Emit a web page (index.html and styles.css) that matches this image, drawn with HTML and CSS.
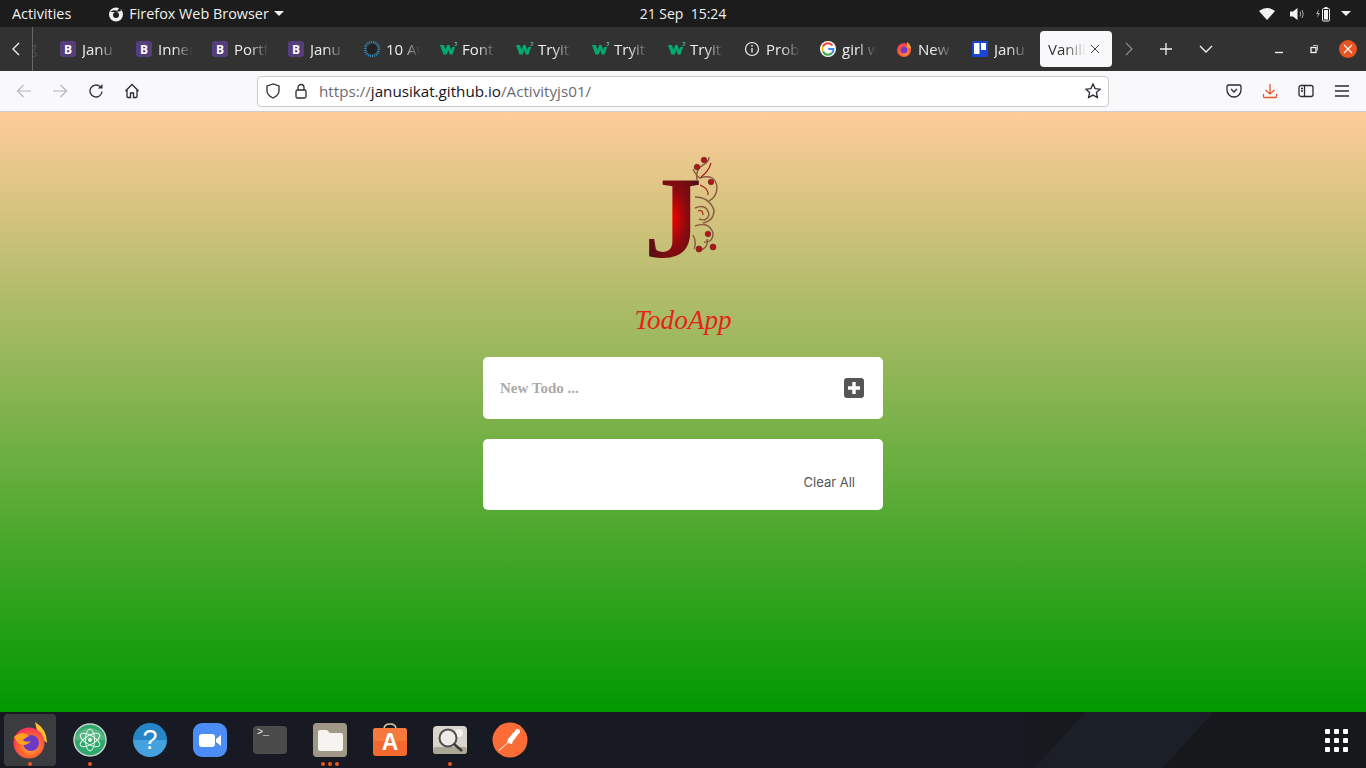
FILE: index.html
```html
<!DOCTYPE html>
<html lang="en">
<head>
  <meta charset="UTF-8">
  <title>Vanilla Todo</title>
  <link rel="stylesheet" href="styles.css">
</head>
<body>
<svg class="defs" width="0" height="0">
  <defs>
    <symbol id="w3" viewBox="0 0 18 16">
      <path d="M0 4h4l1.500 5 1.600-5h2.400l1.600 5 1-3h3l-2.600 7.500H9.800L8.300 9l-1.500 4.500H3.500z" fill="#04aa6d"/>
      <path d="M14.500 1.500h2.500l-1.200 1.300q1.200.3.900 1.200-.5.900-2.200.3" fill="none" stroke="#6fc8a4" stroke-width=".7"/>
    </symbol>
    <radialGradient id="jfill" cx="50%" cy="50%" r="50%">
      <stop offset="0" stop-color="#f20000"/>
      <stop offset=".45" stop-color="#8c0a10"/>
      <stop offset="1" stop-color="#4f1014"/>
    </radialGradient>
    <radialGradient id="ffx" cx="55%" cy="60%" r="65%">
      <stop offset="0" stop-color="#ffbd4f"/>
      <stop offset=".5" stop-color="#ff6a2b"/>
      <stop offset="1" stop-color="#f5256a"/>
    </radialGradient>
  </defs>
</svg>

<header class="topbar">
  <div class="topbar-left">
    <span>Activities</span>
    <span class="app-menu">
      <svg width="16" height="16" viewBox="0 0 16 16"><circle cx="8" cy="8.500" r="7" fill="#eee"/><circle cx="8" cy="9" r="3" fill="#1c1c1c"/><path d="M2 6Q6 3 9 5L12 1l1 4-5 1z" fill="#1c1c1c"/></svg>
      Firefox Web Browser
      <i class="caret"></i>
    </span>
  </div>
  <div class="clock">21 Sep &nbsp;15:24</div>
  <div class="tray">
    <svg class="tray-wifi" width="16" height="14" viewBox="0 0 16 14"><path d="M0 4Q8-2 16 4L8 13z" fill="#f2f2f2"/></svg>
    <svg width="16" height="14" viewBox="0 0 16 14"><path d="M1 4.500h3L8.500 1v12L4 9.500H1z" fill="#f2f2f2"/><path d="M11 4.500q1.500 2.500 0 5M13 3q2.500 4 0 8" stroke="#aaa" fill="none"/></svg>
    <svg width="16" height="16" viewBox="0 0 16 16"><path d="M4 3 1 8h2l-1 4 3-5H3z" fill="#aaa"/><rect x="7.500" y="2.500" width="7" height="12.500" rx="1" fill="none" stroke="#f2f2f2"/><rect x="9" y="4" width="4" height="9.500" fill="#f2f2f2"/><rect x="9.500" y="1" width="3" height="1.500" fill="#f2f2f2"/></svg>
    <i class="caret"></i>
  </div>
</header>

<div class="tabbar">
  <button class="tab-scroll">
    <svg width="12" height="14" viewBox="0 0 12 14"><path d="M9 1 3 7l6 6" class="ln-white"/></svg>
  </button>
  <span class="tab-cut">g</span>
  <div class="tabs">
    <div class="tab"><span class="fav-b">B</span><span class="tab-text">Janu</span></div>
    <div class="tab"><span class="fav-b">B</span><span class="tab-text">Inner</span></div>
    <div class="tab"><span class="fav-b">B</span><span class="tab-text">Portf</span></div>
    <div class="tab"><span class="fav-b">B</span><span class="tab-text">Janu</span></div>
    <div class="tab">
      <svg width="16" height="16" viewBox="0 0 16 16"><circle cx="8" cy="8" r="7" fill="none" stroke="#2a8fc0" stroke-width="2.500" stroke-dasharray="1 1"/><circle cx="8" cy="8" r="5" fill="#222"/></svg>
      <span class="tab-text">10 Aw</span>
    </div>
    <div class="tab tab-w3"><svg width="18" height="16"><use href="#w3"/></svg><span class="tab-text">Font</span></div>
    <div class="tab tab-w3"><svg width="18" height="16"><use href="#w3"/></svg><span class="tab-text">Tryit</span></div>
    <div class="tab tab-w3"><svg width="18" height="16"><use href="#w3"/></svg><span class="tab-text">Tryit</span></div>
    <div class="tab tab-w3"><svg width="18" height="16"><use href="#w3"/></svg><span class="tab-text">Tryit</span></div>
    <div class="tab">
      <svg width="16" height="16" viewBox="0 0 16 16"><circle cx="8" cy="8" r="6.500" fill="none" stroke="#eee" stroke-width="1.200"/><path d="M8 7v4.500" stroke="#eee" stroke-width="1.300"/><circle cx="8" cy="4.800" r=".9" fill="#eee"/></svg>
      <span class="tab-text">Prob</span>
    </div>
    <div class="tab">
      <svg width="16" height="16" viewBox="0 0 16 16"><circle cx="8" cy="8" r="8" fill="#fff"/><path d="M12.500 4.500A5.500 5.500 0 0 0 3 5.500" fill="none" stroke="#ea4335" stroke-width="2"/><path d="M3 5.500a5.500 5.500 0 0 0 0 5" fill="none" stroke="#fbbc05" stroke-width="2"/><path d="M3 10.500a5.500 5.500 0 0 0 9 1.500" fill="none" stroke="#34a853" stroke-width="2"/><path d="M12 12q1.500-1.500 1.400-4H8.200" fill="none" stroke="#4285f4" stroke-width="2"/></svg>
      <span class="tab-text">girl w</span>
    </div>
    <div class="tab">
      <svg width="16" height="16" viewBox="0 0 16 16"><circle cx="8" cy="9" r="7" fill="url(#ffx)"/><path d="M11 1q4 3 4 7l-4-2z" fill="#ffa436"/><circle cx="8" cy="9" r="3.500" fill="#7a38c9"/></svg>
      <span class="tab-text">New</span>
    </div>
    <div class="tab">
      <svg width="16" height="16" viewBox="0 0 16 16"><rect width="16" height="16" rx="1.500" fill="#1a46d8"/><rect x="2" y="2" width="5.500" height="11" fill="#fff"/><rect x="9" y="2" width="5" height="7" fill="#fff"/></svg>
      <span class="tab-text">Janu</span>
    </div>
    <div class="tab tab-active">
      <span class="tab-text">Vanilla</span>
      <svg width="10" height="10" viewBox="0 0 10 10"><path d="m1 1 8 8M9 1 1 9" stroke="#444" fill="none"/></svg>
    </div>
  </div>
  <div class="tab-tools">
    <svg width="10" height="14" viewBox="0 0 10 14"><path d="m2 1 6 6-6 6" class="ln-dim"/></svg>
    <svg class="tool-plus" width="14" height="14" viewBox="0 0 14 14"><path d="M7 1v12M1 7h12" class="ln-white"/></svg>
    <svg class="tool-down" width="14" height="8" viewBox="0 0 14 8"><path d="m1 1 6 6 6-6" class="ln-white"/></svg>
  </div>
  <div class="win-btns">
    <svg class="win-min" width="10" height="10" viewBox="0 0 10 10"><path d="M1 8.500h8" class="ln-white"/></svg>
    <svg width="10" height="10" viewBox="0 0 10 10"><rect x="2" y="3.500" width="5" height="5" class="ln-white"/><path d="M4 1.500h4.500v5" stroke="#bbb" fill="none"/></svg>
    <span class="win-close"><svg width="10" height="10" viewBox="0 0 10 10"><path d="m1 1 8 8M9 1 1 9" class="ln-white" stroke-width="1.500"/></svg></span>
  </div>
</div>

<nav class="navbar">
  <div class="nav-group">
    <span class="nav-btn"><svg width="16" height="16" viewBox="0 0 16 16"><path d="M15 8H1.500M7.500 2l-6 6 6 6" class="ln-off"/></svg></span>
    <span class="nav-btn"><svg width="16" height="16" viewBox="0 0 16 16"><path d="M1 8h13.500M8.500 2l6 6-6 6" class="ln-off"/></svg></span>
    <span class="nav-btn"><svg width="16" height="16" viewBox="0 0 16 16"><path d="M14 8.500A6 6 0 1 1 12 3.500" class="ln-dark"/><path d="M14.500 1v4.500H10z" fill="#2b2a33"/></svg></span>
    <span class="nav-btn"><svg width="16" height="16" viewBox="0 0 16 16"><path d="M1.500 8 8 1.500 14.500 8M3 7v6.500q0 1 1 1h2.500V10h3v4.500H12q1 0 1-1V7" class="ln-dark"/></svg></span>
  </div>
  <div class="urlbar">
    <svg width="16" height="16" viewBox="0 0 16 16"><path d="M8 1 2 3v5q0 4 6 7 6-3 6-7V3z" class="ln-dark" stroke-width="1.300"/></svg>
    <svg class="url-lock" width="16" height="16" viewBox="0 0 16 16"><rect x="3" y="7" width="10" height="8" rx="1.500" class="ln-dark"/><path d="M5 7V4.500a3 3 0 0 1 6 0V7" class="ln-dark"/></svg>
    <span class="url"><span class="url-dim">https://</span>janusikat.github.io<span class="url-dim">/Activityjs01/</span></span>
    <svg class="url-star" width="16" height="16" viewBox="0 0 16 16"><path d="m8 1 2.100 4.600 5 .6-3.700 3.400 1 5L8 12.100l-4.400 2.500 1-5L.9 6.200l5-.6z" class="ln-dark" stroke-width="1.200"/></svg>
  </div>
  <div class="nav-group">
    <span class="nav-btn"><svg width="16" height="16" viewBox="0 0 16 16"><path d="M2.500 2h11Q15 2 15 3.500V7A7 7 0 0 1 1 7V3.500Q1 2 2.500 2z" class="ln-dark" stroke-width="1.200"/><path d="m5 6 3 3 3-3" class="ln-dark" stroke-width="1.500"/></svg></span>
    <span class="nav-btn"><svg width="16" height="16" viewBox="0 0 16 16"><path d="M8 1v10M3.500 7 8 11l4.500-4M1.500 11v2.500q0 1 1 1h11q1 0 1-1V11" fill="none" stroke="#e8562a" stroke-width="1.300"/></svg></span>
    <span class="nav-btn"><svg width="16" height="16" viewBox="0 0 16 16"><rect x="1" y="2.500" width="14" height="11" rx="2" class="ln-dark"/><path d="M6.500 2.500v11M3 5.500h2M3 8h2" class="ln-dark"/></svg></span>
    <span class="nav-btn"><svg width="16" height="16" viewBox="0 0 16 16"><path d="M1 3h14M1 8h14M1 13h14" class="ln-dark" stroke-width="1.300"/></svg></span>
  </div>
</nav>

<main class="page">
  <svg class="logo" width="72" height="130" viewBox="0 -4 72 130">
    <g class="vine">
      <path d="M50 25Q48 14 56 10Q62 7 62 2"/>
      <path d="M46 14Q50 22 53 23Q68 18 70 32Q70 42 62 46"/>
      <path d="M48 42Q62 42 67 55Q67 66 56 68"/>
      <path d="M48 53Q60 48 62 60Q60 67 52 64"/>
      <path d="M48 71Q62 66 66 78Q66 88 57 87"/>
      <path d="M50 96Q62 94 60 84"/>
      <path d="M46 80Q50 88 47 94"/>
    </g>
    <g class="vine-red">
      <path d="M54 22Q62 16 64 8"/>
      <path d="M53 30Q62 34 61 40"/>
      <path d="M51 56Q56 54 56 60"/>
    </g>
    <text x="-3" y="102" class="logo-j" fill="url(#jfill)">J</text>
    <g class="vine-dots">
      <circle cx="57" cy="5" r="2.800"/>
      <circle cx="50" cy="12" r="2.800"/>
      <circle cx="64" cy="27" r="2.800"/>
      <circle cx="61" cy="79" r="2.800"/>
      <circle cx="52" cy="94" r="3"/>
      <circle cx="66" cy="92" r="3"/>
    </g>
  </svg>
  <h1 class="title">TodoApp</h1>
  <form class="card card-new">
    <input class="new-todo" type="text" placeholder="New Todo ...">
    <span class="add-btn">
      <svg width="14" height="14" viewBox="0 0 14 14"><path d="M7 1v12M1 7h12" stroke="#fff" stroke-width="3.400" fill="none"/></svg>
    </span>
  </form>
  <section class="card card-list">
    <a class="clear-all">Clear All</a>
  </section>
</main>

<footer class="dock">
  <div class="dock-item dock-active">
    <svg width="36" height="38" viewBox="0 0 36 38"><path d="M23 1q12 7 12 21l-9-8z" fill="#ffc22e"/><circle cx="17" cy="22" r="15.500" fill="url(#ffx)"/><circle cx="19" cy="22" r="8" fill="#6d3ac5"/><path d="M2 16q8-7 15-1l-7 4q4 3 9 1-6 7-13 2z" fill="#ffa21f"/></svg>
    <i class="dot"></i>
  </div>
  <div class="dock-item">
    <svg width="34" height="34" viewBox="0 0 34 34"><circle cx="17" cy="17" r="16" fill="#2fa86e" stroke="#c9d2cc" stroke-width="1.500"/><path d="M1.500 17a16 16 0 0 1 31 0z" fill="#57b584"/><g fill="none" stroke="#eaf5ee"><ellipse cx="17" cy="17" rx="11" ry="4.500" transform="rotate(30 17 17)"/><ellipse cx="17" cy="17" rx="11" ry="4.500" transform="rotate(-30 17 17)"/><ellipse cx="17" cy="17" rx="11" ry="4.500" transform="rotate(90 17 17)"/></g><circle cx="17" cy="17" r="2" fill="#eaf5ee"/></svg>
    <i class="dot"></i>
  </div>
  <div class="dock-item"><span class="ic-help">?</span></div>
  <div class="dock-item">
    <svg width="34" height="34" viewBox="0 0 34 34"><rect width="34" height="34" rx="9" fill="#4b8df5"/><rect x="6" y="11" width="16" height="13" rx="3" fill="#fff"/><path d="m23 16 5-4v11l-5-4z" fill="#fff"/></svg>
  </div>
  <div class="dock-item"><span class="ic-term">&gt;_</span></div>
  <div class="dock-item">
    <svg width="34" height="34" viewBox="0 0 34 34"><rect width="34" height="34" rx="4" fill="#a09886"/><path d="M5 9q0-2 2-2h7l3 3h11q2 0 2 2v14q0 2-2 2H7q-2 0-2-2z" fill="#f5f4f0"/></svg>
    <span class="dots3"><i class="dot"></i><i class="dot"></i><i class="dot"></i></span>
  </div>
  <div class="dock-item">
    <svg width="34" height="34" viewBox="0 0 34 34"><path d="M11 6Q11 1 17 1t6 5" fill="none" stroke="#d8c9a8" stroke-width="1.500"/><rect y="5" width="34" height="28" rx="3" fill="#f26a2e"/><rect y="5" width="34" height="13" rx="3" fill="#f47a3e"/><text x="17" y="27" class="ic-a">A</text></svg>
  </div>
  <div class="dock-item">
    <svg width="34" height="28" viewBox="0 0 34 28"><rect width="34" height="28" rx="4" fill="#d8d6cc"/><rect y="21" width="34" height="7" rx="3" fill="#aaa795"/><circle cx="26" cy="7" r="4" fill="#f2f1ec"/><circle cx="15" cy="12" r="8.500" fill="#ecebe6" stroke="#4e4e4e" stroke-width="2"/><path d="m21 18 8 7" stroke="#3a3a3a" stroke-width="2.500"/></svg>
    <i class="dot"></i>
  </div>
  <div class="dock-item">
    <svg width="36" height="36" viewBox="0 0 36 36"><circle cx="18" cy="18" r="17.500" fill="#fb6c37"/><path d="M7 28 15 21l1-4 5-6q3-3 5-2t-1 5l-4 5-1 3-4-1-9 8z" fill="#fff"/><circle cx="25.500" cy="9.500" r="2.500" fill="#fff"/></svg>
  </div>
  <div class="dock-grid">
    <i></i><i></i><i></i><i></i><i></i><i></i><i></i><i></i><i></i>
  </div>
</footer>
</body>
</html>
```

FILE: styles.css
```css
html,body{
    height: 100%;
    margin: 0;
}
body{
    display: flex;
    flex-direction: column;
    height: 768px;
    overflow: hidden;
    font-family: "Open Sans", "Noto Sans", sans-serif;
}
i{
    display: block;
}
.defs{
    position: absolute;
}
.ln-white{
    fill: none;
    stroke: #f4f4f4;
    stroke-width: 1.3;
}
.ln-dim{
    fill: none;
    stroke: #8a898c;
    stroke-width: 1.2;
}
.ln-off{
    fill: none;
    stroke: #b5b5b8;
    stroke-width: 1.2;
}
.ln-dark{
    fill: none;
    stroke: #2b2a33;
    stroke-width: 1.3;
}

/* system bar */
.topbar{
    display: grid;
    grid-template-columns: 1fr auto 1fr;
    align-items: center;
    height: 27px;
    padding: 0 12px;
    background: #1c1c1c;
    color: #f0f0f0;
    font-size: 14.4px;
}
.topbar-left{
    display: flex;
    align-items: center;
    gap: 37px;
}
.clock{
    font-size: 14px;
}
.app-menu{
    display: flex;
    align-items: center;
    gap: 5px;
}
.caret{
    width: 0;
    height: 0;
    border-left: 5px solid transparent;
    border-right: 5px solid transparent;
    border-top: 5px solid #f0f0f0;
}
.tray{
    display: flex;
    align-items: center;
    justify-content: flex-end;
    gap: 10px;
    padding-right: 3px;
}
.tray-wifi{
    margin-right: 4px;
}

/* tab strip */
.tabbar{
    display: flex;
    align-items: center;
    height: 44px;
    background: #333233;
    color: #eee;
    font-size: 15px;
}
.tab-scroll{
    display: flex;
    align-items: center;
    justify-content: center;
    width: 32px;
    height: 44px;
    padding: 0;
    border: 0;
    background: none;
}
.tab-cut{
    box-sizing: border-box;
    width: 16px;
    height: 44px;
    padding-top: 10px;
    border-left: 1px solid #666;
    overflow: hidden;
    color: #4c4b4c;
    text-indent: -4px;
}
.tabs{
    display: flex;
    align-items: center;
}
.tab{
    display: flex;
    align-items: center;
    box-sizing: border-box;
    width: 76px;
    height: 36px;
    padding-left: 12px;
    gap: 6px;
}
.tab-w3{
    gap: 4px;
}
.tab-text{
    overflow: hidden;
    width: 38px;
    white-space: nowrap;
    -webkit-mask-image: linear-gradient(90deg, #000 40%, transparent 90%);
    mask-image: linear-gradient(90deg, #000 40%, transparent 90%);
}
.fav-b{
    display: flex;
    align-items: center;
    justify-content: center;
    width: 16px;
    height: 16px;
    border-radius: 3px;
    background: #563d7c;
    color: #fff;
    font-size: 12px;
    font-weight: 700;
}
.tab-active{
    width: 72px;
    margin-left: 4px;
    padding: 0 6px 0 8px;
    gap: 0;
    border-radius: 4px;
    background: #f9f9fb;
    color: #333;
}
.tab-active .tab-text{
    width: 42px;
}
.tab-tools{
    display: flex;
    align-items: center;
    margin-left: 12px;
}
.tool-plus{
    margin-left: 25px;
}
.tool-down{
    margin-left: 26px;
}
.win-btns{
    display: flex;
    align-items: center;
    margin-left: auto;
    padding-right: 9px;
    gap: 20px;
}
.win-min{
    margin-right: 5px;
}
.win-close{
    display: flex;
    align-items: center;
    justify-content: center;
    width: 18px;
    height: 18px;
    border-radius: 50%;
    background: #e95420;
}

/* toolbar */
.navbar{
    display: flex;
    align-items: center;
    box-sizing: border-box;
    height: 41px;
    padding: 0 6px;
    border-bottom: 1px solid #ccc;
    background: #f9f9fb;
}
.nav-group{
    display: flex;
}
.nav-btn{
    display: flex;
    align-items: center;
    justify-content: center;
    width: 36px;
    height: 32px;
}
.urlbar{
    display: flex;
    align-items: center;
    flex: 1;
    box-sizing: border-box;
    height: 31px;
    margin: 0 107px;
    padding: 0 7px;
    border: 1px solid #ccc;
    border-radius: 4px;
    background: #fff;
    font-size: 15.2px;
}
.url-lock{
    margin-left: 12px;
}
.url{
    margin-left: 10px;
    color: #15141a;
}
.url-dim{
    color: #6b6b72;
}
.url-star{
    margin-left: auto;
}

/* the page itself */
.page{
    display: flex;
    flex-direction: column;
    align-items: center;
    flex: 1;
    padding-top: 39px;
    background: linear-gradient(#ffcc99, #009900);
}
.logo{
    margin-left: -1px;
}
.logo-j{
    font-family: "Liberation Serif", serif;
    font-size: 116px;
    font-weight: 700;
}
.vine{
    fill: none;
    stroke: #8a5a40;
    stroke-width: 1.4;
}
.vine-red{
    fill: none;
    stroke: #a81418;
    stroke-width: 1.1;
}
.vine-dots{
    fill: #b3141c;
    stroke: #6b2a20;
    stroke-width: .7;
}
.title{
    margin: 18px 0 0;
    height: 42px;
    color: #e4241a;
    font-family: "Liberation Serif", serif;
    font-size: 27.2px;
    font-style: italic;
    font-weight: 400;
    line-height: 42px;
}
.card{
    box-sizing: border-box;
    width: 400px;
    border-radius: 5px;
    background: #fff;
}
.card-new{
    display: flex;
    align-items: center;
    justify-content: space-between;
    height: 62px;
    margin-top: 16px;
    padding: 0 19px 0 17px;
}
.new-todo{
    width: 300px;
    padding: 0;
    border: 0;
    outline: 0;
    font-family: "Liberation Serif", serif;
    font-size: 15px;
    font-weight: 700;
}
.new-todo::placeholder{
    color: #aaa;
    opacity: 1;
}
.add-btn{
    display: flex;
    align-items: center;
    justify-content: center;
    width: 20px;
    height: 20px;
    border-radius: 3px;
    background: #555;
}
.card-list{
    display: flex;
    align-items: flex-end;
    justify-content: flex-end;
    height: 71px;
    margin-top: 20px;
    padding: 0 28px 20px 0;
}
.clear-all{
    color: #555;
    font-family: Inter, "Noto Sans", sans-serif;
    font-size: 13px;
}

/* dock */
.dock{
    position: relative;
    display: flex;
    align-items: center;
    height: 56px;
    background: linear-gradient(90deg, #171a22 0, #171a22 1000px, #17181b 1100px);
    overflow: hidden;
}
.dock::before{
    content: "";
    position: absolute;
    top: 0;
    bottom: 0;
    left: 1060px;
    width: 128px;
    background: #1b1f27;
    transform: skewX(-42deg);
}
.dock-item{
    position: relative;
    display: flex;
    align-items: center;
    justify-content: center;
    width: 60px;
    height: 56px;
}
.dock-active::before{
    content: "";
    position: absolute;
    top: 2px;
    bottom: 2px;
    left: 4px;
    right: 4px;
    border-radius: 4px;
    background: #3b3c40;
}
.dock-item svg{
    position: relative;
}
.dock-item > .dot,
.dots3{
    position: absolute;
    bottom: 2px;
}
.dot{
    width: 4px;
    height: 4px;
    border-radius: 50%;
    background: #e95420;
}
.dots3{
    display: flex;
    gap: 3px;
}
.ic-help{
    width: 34px;
    height: 34px;
    border-radius: 50%;
    background: linear-gradient(#2585c7 50%, #45a2de 50%);
    color: #fff;
    font-family: "Liberation Sans", sans-serif;
    font-size: 27px;
    line-height: 34px;
    text-align: center;
}
.ic-term{
    box-sizing: border-box;
    width: 34px;
    height: 28px;
    padding-left: 4px;
    border-radius: 4px;
    background: #4b4b4b;
    color: #eee;
    font-family: "Liberation Mono", monospace;
    font-size: 10px;
    line-height: 14px;
}
.ic-a{
    fill: #fff;
    font-family: "Liberation Sans", sans-serif;
    font-size: 23px;
    font-weight: 700;
    text-anchor: middle;
}
.dock-grid{
    display: grid;
    grid-template-columns: repeat(3, 5px);
    gap: 4px;
    margin-left: auto;
    margin-right: 18px;
}
.dock-grid i{
    width: 5px;
    height: 5px;
    border-radius: 1px;
    background: #fff;
}
```
